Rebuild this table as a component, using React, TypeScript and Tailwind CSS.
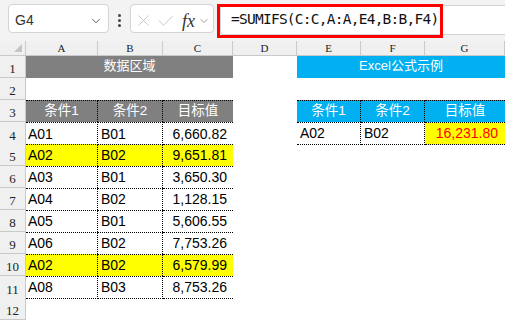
import React from "react";
import { ChevronDown, X, Check } from "lucide-react";

// column template shared by the header row and every sheet row
const grid = "grid grid-cols-[26px_72px_65px_70px_64px_64px_64px_80px]";
const cellFont = "font-['Liberation_Sans','Noto_Sans_CJK_SC',sans-serif]";
const hdrFont = "font-['Liberation_Serif',serif]";

const data: [string, string, string, boolean][] = [
  ["A01", "B01", "6,660.82", false],
  ["A02", "B02", "9,651.81", true],
  ["A03", "B01", "3,650.30", false],
  ["A04", "B02", "1,128.15", false],
  ["A05", "B01", "5,606.55", false],
  ["A06", "B02", "7,753.26", false],
  ["A02", "B02", "6,579.99", true],
  ["A08", "B03", "8,753.26", false],
];

const RowHead: React.FC<{ n: number }> = ({ n }) => (
  <div
    className={`${hdrFont} flex items-end justify-center bg-[#f0f0f0] border-r border-b border-[#c9c9c9] text-[13px] leading-[14px] text-[#222] pb-[1px]`}
  >
    {n}
  </div>
);

const FormulaBar: React.FC = () => (
  <div className="h-[41px] bg-[#f3f3f3] flex items-start pt-[4px] pl-[8px]">
    <div className="w-[101px] h-[29px] bg-white border border-[#d4d4d4] rounded-[4px] flex items-center justify-between pl-[6px] pr-[5px] pt-[4px]">
      <span className="font-['Liberation_Sans',sans-serif] text-[14px] text-[#333]">G4</span>
      <ChevronDown size={14} strokeWidth={1.6} className="text-[#555]" />
    </div>
    <div className="w-[21px] h-[29px] flex flex-col items-center justify-center gap-[2px] pt-[4px]">
      <span className="w-[3px] h-[3px] rounded-full bg-[#444]" />
      <span className="w-[3px] h-[3px] rounded-full bg-[#444]" />
      <span className="w-[3px] h-[3px] rounded-full bg-[#444]" />
    </div>
    <div className="w-[84px] h-[29px] bg-white border border-[#d4d4d4] rounded-[4px] flex items-center pl-[3px] pt-[4px]">
      <X size={19} strokeWidth={1.1} className="text-[#c2c2c2]" />
      <Check size={20} strokeWidth={1.1} className="text-[#c2c2c2] ml-[3px]" />
      <span className="font-['Liberation_Serif',serif] italic text-[18px] leading-none text-[#333] ml-[6px]">
        fx
      </span>
      <ChevronDown size={12} strokeWidth={1.5} className="text-[#777] ml-[3px]" />
    </div>
    <div className="relative flex-1 ml-[6px] mt-[1px] h-[30px] bg-white border border-r-0 border-[#d4d4d4] rounded-l-[4px] flex items-center pl-[10px]">
      <span className="font-['DejaVu_Sans_Mono',monospace] text-[14.5px] tracking-[-0.75px] text-[#111]">
        =SUMIFS(C:C,A:A,E4,B:B,F4)
      </span>
      <div className="absolute left-[-4px] top-[-2px] w-[226px] h-[34px] border-[3px] border-[#ff0000]" />
    </div>
  </div>
);

const ColumnHeader: React.FC = () => (
  <div className={`${grid} h-[15px]`}>
    <div className="relative bg-[#f0f0f0] border-r border-b border-[#c9c9c9]">
      <div className="absolute right-[3px] bottom-[3px] w-0 h-0 border-l-[8px] border-l-transparent border-b-[8px] border-b-[#c4c4c4]" />
    </div>
    {["A", "B", "C", "D", "E", "F", "G"].map((c) => (
      <div
        key={c}
        className={`${hdrFont} flex items-center justify-center bg-[#f0f0f0] border-r border-b border-[#c9c9c9] text-[11px] leading-none text-[#222]`}
      >
        {c}
      </div>
    ))}
  </div>
);

const dot = "border-t border-dotted border-black";

const App: React.FC = () => {
  return (
    <div className={`w-[505px] h-[321px] overflow-hidden bg-white ${cellFont}`}>
      <FormulaBar />
      <ColumnHeader />

      {/* row 1 */}
      <div className={`${grid} h-[22px]`}>
        <RowHead n={1} />
        <div className="col-span-3 bg-[#808080] text-white text-[13px] flex items-center justify-center pb-[2px]">
          数据区域
        </div>
        <div />
        <div className="col-span-3 bg-[#00b0f0] text-white text-[13px] flex items-center justify-center pb-[2px]">
          Excel公式示例
        </div>
      </div>

      {/* row 2 */}
      <div className={`${grid} h-[22px]`}>
        <RowHead n={2} />
      </div>

      {/* row 3 */}
      <div className={`${grid} h-[22px] text-[13.5px] text-white`}>
        <RowHead n={3} />
        <div className={`${dot} border-r bg-[#808080] flex items-center justify-center`}>条件1</div>
        <div className={`${dot} border-r bg-[#808080] flex items-center justify-center`}>条件2</div>
        <div className={`${dot} bg-[#808080] flex items-center justify-center`}>目标值</div>
        <div />
        <div className={`${dot} border-r bg-[#00b0f0] flex items-center justify-center`}>条件1</div>
        <div className={`${dot} border-r bg-[#00b0f0] flex items-center justify-center`}>条件2</div>
        <div className={`${dot} bg-[#00b0f0] flex items-center justify-center`}>目标值</div>
      </div>

      {/* rows 4 - 11 */}
      {data.map(([a, b, v, hl], i) => {
        const last = i === data.length - 1;
        const bg = hl ? "bg-[#ffff00]" : "";
        const edge = `${dot} ${last ? "border-b" : ""}`;
        return (
          <div key={i} className={`${grid} h-[22px] text-[14px] text-black`}>
            <RowHead n={i + 4} />
            <div className={`${edge} border-r ${bg} flex items-center pl-[2px]`}>{a}</div>
            <div className={`${edge} border-r ${bg} flex items-center pl-[3px]`}>{b}</div>
            <div className={`${edge} ${bg} flex items-center justify-end pr-[6px]`}>{v}</div>
            <div />
            {i === 0 ? (
              <>
                <div className={`${dot} border-b border-r flex items-center pl-[3px]`}>A02</div>
                <div className={`${dot} border-b border-r flex items-center pl-[3px]`}>B02</div>
                <div className={`${dot} border-b bg-[#ffff00] text-[#ff0000] flex items-center justify-end pr-[7px]`}>
                  16,231.80
                </div>
              </>
            ) : (
              <>
                <div />
                <div />
                <div />
              </>
            )}
          </div>
        );
      })}

      {/* row 12 */}
      <div className={`${grid} h-[22px]`}>
        <RowHead n={12} />
      </div>
    </div>
  );
};

export default App;
